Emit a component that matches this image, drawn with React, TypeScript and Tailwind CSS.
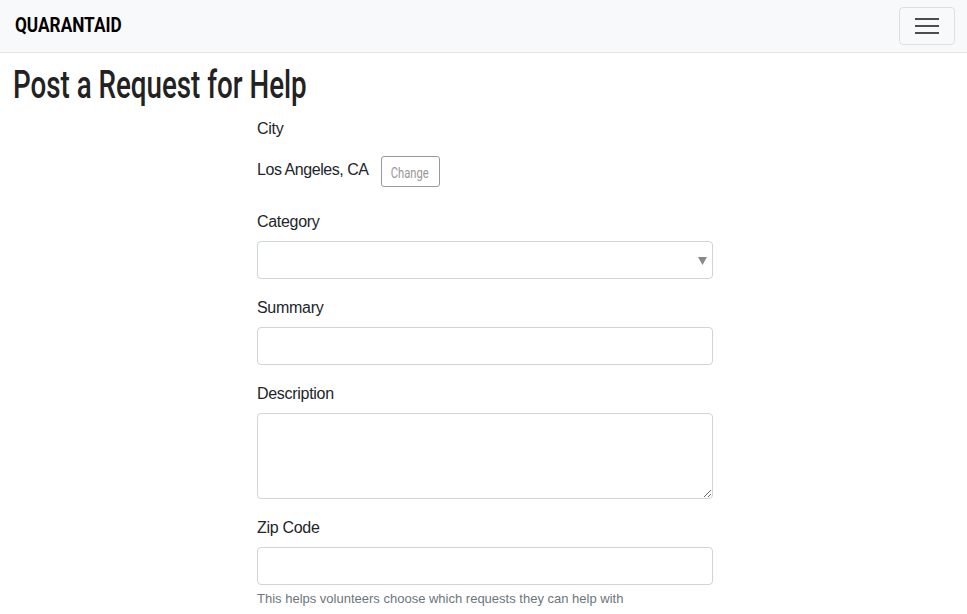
import React from "react";

const cond = { fontFamily: 'Roboto, "Liberation Sans", sans-serif' };

export default function App() {
  return (
    <div className="min-h-[614px] bg-white text-[#212529]" style={{ fontFamily: '"Liberation Sans", Roboto, sans-serif' }}>
      <nav className="h-[53px] bg-[#f8f9fa] border-b border-[#e5e5e5] flex items-center justify-between pl-[15px] pr-[12px]">
        <span className="inline-block origin-left scale-x-[0.82] text-[21px] font-bold text-black whitespace-nowrap" style={cond}>QUARANTAID</span>
        <button className="w-[56px] h-[38px] border border-[rgba(0,0,0,0.1)] rounded-[4px] flex items-center justify-center">
          <svg width="26" height="20" viewBox="0 0 26 20">
            <path d="M1 3h24M1 10h24M1 17h24" stroke="#4d4d4d" strokeWidth="2" />
          </svg>
        </button>
      </nav>
      <h1 className="pl-[13px] mt-[8px] h-[48px] flex items-center">
        <span className="inline-block origin-left scale-x-[0.73] text-[38px] leading-[48px] font-medium text-[#222] whitespace-nowrap" style={cond}>Post a Request for Help</span>
      </h1>
      <div className="w-[456px] ml-[257px] mt-[8px] tracking-[-0.3px]">
        <div className="text-[16px] leading-[24px]">City</div>
        <div className="flex items-center mt-[15px] h-[31px]">
          <span className="text-[16px] leading-[24px] -mt-[3px] tracking-[-0.45px]">Los Angeles, CA</span>
          <button className="ml-[12px] h-[31px] w-[59px] border border-[#999] rounded-[3px] text-[#999] flex items-center justify-center pt-[3px] overflow-hidden tracking-normal">
            <span className="inline-block scale-x-[0.8] text-[14px]" style={cond}>Change</span>
          </button>
        </div>
        <div className="text-[16px] leading-[24px] mt-[23px]">Category</div>
        <div className="relative mt-[7px] h-[38px] border border-[#ced4da] rounded-[4px] bg-white">
          <svg className="absolute right-[5px] top-[15px]" width="9" height="8" viewBox="0 0 9 8">
            <path d="M0 0h9L4.5 8z" fill="#888" />
          </svg>
        </div>
        <div className="text-[16px] leading-[24px] mt-[17px]">Summary</div>
        <input className="block w-full mt-[7px] h-[38px] border border-[#ced4da] rounded-[4px] outline-none" />
        <div className="text-[16px] leading-[24px] mt-[17px]">Description</div>
        <textarea className="block w-full mt-[7px] h-[86px] border border-[#ced4da] rounded-[4px] outline-none" />
        <div className="text-[16px] leading-[24px] mt-[17px]">Zip Code</div>
        <input className="block w-full mt-[7px] h-[38px] border border-[#ced4da] rounded-[4px] outline-none" />
        <div className="text-[13px] leading-[19px] text-[#6c757d] mt-[4px] tracking-normal">This helps volunteers choose which requests they can help with</div>
      </div>
    </div>
  );
}
